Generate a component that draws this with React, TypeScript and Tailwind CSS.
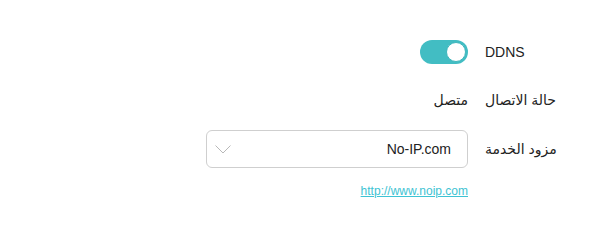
import React, { useState } from "react";

const font = { fontFamily: '"Liberation Sans", "DejaVu Sans", sans-serif' };

const Row = ({ label, children }: { label: string; children: React.ReactNode }) => (
  <div className="flex flex-row items-center gap-[17px]">
    <div className="w-[72px] shrink-0 text-left text-[14px] text-[#222]">{label}</div>
    <div className="flex w-[262px] flex-row items-center">{children}</div>
  </div>
);

export default function App() {
  const [enabled, setEnabled] = useState(true);

  return (
    <div
      dir="rtl"
      className="flex h-[203px] w-[611px] flex-col bg-white pr-[54px] pt-[40px] font-['Liberation_Sans','DejaVu_Sans',sans-serif]"
      style={font}
    >
      <Row label="DDNS">
        <button
          type="button"
          onClick={() => setEnabled(!enabled)}
          className={`relative h-[24px] w-[48px] rounded-full transition ${enabled ? "bg-[#42bdc3]" : "bg-gray-300"}`}
        >
          <span
            className={`absolute top-[2px] h-[20px] w-[20px] rounded-full border border-[#3fb6bc] bg-white ${enabled ? "left-[26px]" : "left-[2px]"}`}
          />
        </button>
      </Row>

      <div className="mt-[24px]">
        <Row label="حالة الاتصال">
          <span className="text-[14px] leading-[24px] text-[#222]">متصل</span>
        </Row>
      </div>

      <div className="mt-[18px]">
        <Row label="مزود الخدمة">
          <div className="flex h-[38px] w-full flex-row items-center justify-between rounded-[6px] border border-[#cfcfcf] pl-[8px] pr-[16px]">
            <span dir="ltr" className="text-[14px] text-[#222]">No-IP.com</span>
            <svg width="16" height="9" viewBox="0 0 16 9" fill="none">
              <path d="M0.5 0.5 L8 8 L15.5 0.5" stroke="#b8b8b8" strokeWidth="1" />
            </svg>
          </div>
        </Row>
      </div>

      <div className="mt-[10px] flex flex-row gap-[17px]">
        <div className="w-[72px] shrink-0" />
        <div className="w-[262px] text-right">
          <a href="#" dir="ltr" className="text-[12px] leading-[16px] text-[#3ec3d3] underline">
            http://www.noip.com
          </a>
        </div>
      </div>
    </div>
  );
}
